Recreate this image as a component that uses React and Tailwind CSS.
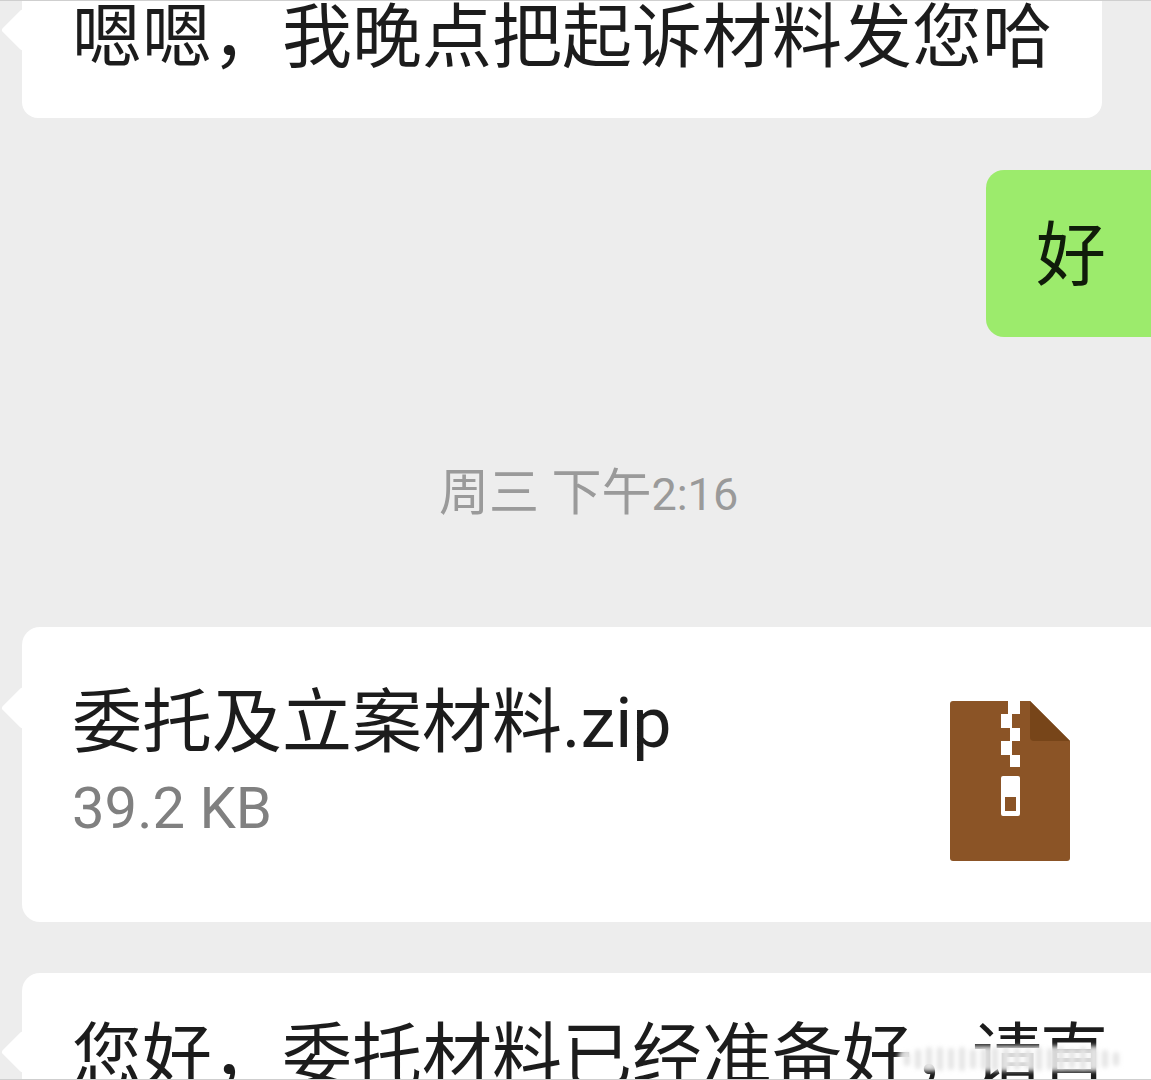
const CJK = "font-['Roboto','Noto_Sans_CJK_SC',sans-serif]";

function Tail({ className }) {
  return <span className={`absolute left-[-15px] w-[30px] h-[30px] rotate-45 rounded-[3px] bg-white ${className}`} />;
}

function ZipIcon() {
  return (
    <svg width="120" height="160" viewBox="0 0 120 160" className="mt-[12px] shrink-0">
      <path d="M3 0H80L120 40V157a3 3 0 0 1-3 3H3a3 3 0 0 1-3-3V3a3 3 0 0 1 3-3z" fill="#8b5426" />
      <path d="M80 0L120 40H84a4 4 0 0 1-4-4z" fill="#774519" />
      <path d="M58 0H70V13H62V27H70V40H62V54H70V66H60V54H51V40H60V27H51V13H58z" fill="#fff" />
      <path fillRule="evenodd" d="M53 75H68a2 2 0 0 1 2 2V113a2 2 0 0 1-2 2H53a2 2 0 0 1-2-2V77a2 2 0 0 1 2-2zM55 96V110H66V96z" fill="#fff" />
    </svg>
  );
}

export default function App() {
  return (
    <div className={`relative h-[1080px] w-[1151px] overflow-hidden bg-[#ededed] ${CJK}`}>
      <div className="relative ml-[22px] flex h-[118px] w-[1080px] items-start rounded-b-[16px] bg-white pl-[50px] text-[70px] leading-[76px] text-[#1c1c1c]">
        <Tail className="top-[15px]" />
        <span className="whitespace-nowrap">嗯嗯，我晚点把起诉材料发您哈</span>
      </div>

      <div className="mt-[52px] flex justify-end">
        <div className="flex h-[167px] w-[165px] items-center rounded-l-[18px] bg-[#9ceb6c] pl-[50px] pt-[6px] text-[70px] text-[#101c0a]">
          好
        </div>
      </div>

      <div className="mt-[124px] h-[64px] pl-[439px] text-[50px] leading-[64px] text-[#9a9a9a] whitespace-nowrap">
        周三 下午<span className="text-[45px]">2:16</span>
      </div>

      <div className="relative mt-[102px] ml-[22px] flex h-[295px] items-center justify-between rounded-l-[18px] bg-white pl-[50px] pr-[81px]">
        <Tail className="top-[66px]" />
        <div className="-mt-[26px]">
          <div className="text-[70px] leading-[84px] text-[#1c1c1c] whitespace-nowrap">委托及立案材料.zip</div>
          <div className="mt-[8px] text-[58px] leading-[70px] text-[#808080]">39.2 KB</div>
        </div>
        <ZipIcon />
      </div>

      <div className="relative mt-[51px] ml-[22px] h-[200px] rounded-l-[18px] bg-white pl-[50px] pt-[42px] text-[70px] leading-[84px] text-[#1c1c1c] whitespace-nowrap">
        <Tail className="top-[64px]" />
        您好，委托材料已经准备好，<span className="-ml-[10px] tracking-[-3px]">请直</span>
      </div>

      {/* watermark */}
      <div className="absolute left-[898px] top-[1046px] flex h-[25px] w-[243px] items-center gap-[5px] rounded-full bg-white/80 px-[6px] blur-[2px]">
        {[14, 20, 24, 24, 22, 24, 20, 22, 24, 24, 22, 20, 24, 22, 24, 20, 24, 22, 18, 14].map((h, i) => (
          <span key={i} className="w-[6px] rounded-full bg-[#e4e4e4]" style={{ height: h }} />
        ))}
      </div>

      <div className="absolute inset-x-0 top-0 h-px bg-[#cfcfcf]" />
      <div className="absolute inset-x-0 bottom-0 h-px bg-[#cfcfcf]" />
    </div>
  );
}
